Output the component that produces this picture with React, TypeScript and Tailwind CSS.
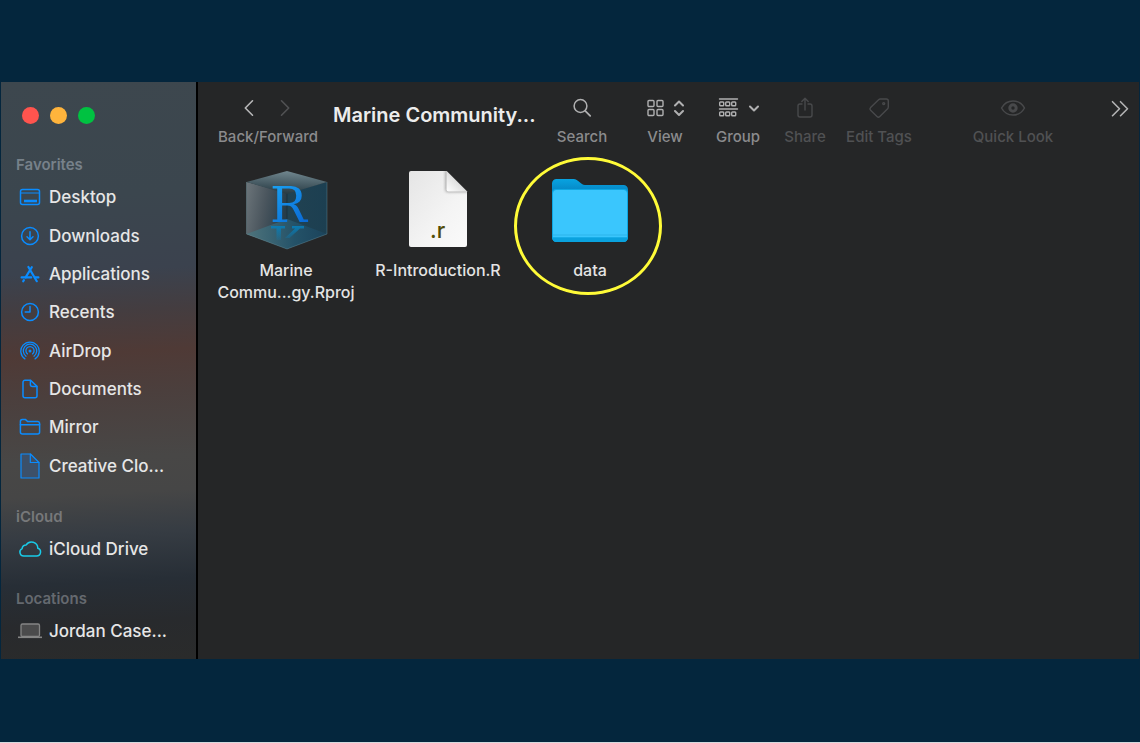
import type { ReactNode } from 'react';

function Glyph({ w, h, children, sw = 1.5 }: { w: number; h: number; children: ReactNode; sw?: number }) {
  return (
    <svg
      width={w}
      height={h}
      viewBox={`0 0 ${w} ${h}`}
      fill="none"
      stroke="currentColor"
      strokeWidth={sw}
      strokeLinecap="round"
      strokeLinejoin="round"
      aria-hidden="true"
      className="shrink-0"
    >
      {children}
    </svg>
  );
}

const desktopIcon = (
  <Glyph w={22} h={18}>
    <rect x="1.5" y="1.5" width="19" height="15" rx="2" />
    <path d="M1.5 5h19" strokeWidth="1.2" />
    <path d="M5 13h13" strokeWidth="2.6" strokeLinecap="butt" />
  </Glyph>
);

const downloadsIcon = (
  <Glyph w={20} h={20}>
    <circle cx="10" cy="10" r="8.4" />
    <path d="M10 5.8v7.8M7 10.8l3 3 3-3" />
  </Glyph>
);

const applicationsIcon = (
  <Glyph w={20} h={20} sw={2.2}>
    <path d="M11.8 3.2 5.6 13.4M3.9 16.1l-.7 1.2M8.4 3l8.4 14.2" />
    <path d="M1.6 13.4h9.6M15 13.4h3.4" />
  </Glyph>
);

const recentsIcon = (
  <Glyph w={20} h={20}>
    <circle cx="10" cy="10" r="8.4" />
    <path d="M10 4.6V10H5.2" />
  </Glyph>
);

const airdropIcon = (
  <Glyph w={20} h={20} sw={1.3}>
    <path d="M4.9 17.9a9.2 9.2 0 1 1 10.2 0" />
    <path d="M6 15.2a6.7 6.7 0 1 1 8 0" />
    <path d="M7.5 12.9a4.1 4.1 0 1 1 5 0" />
    <circle cx="10" cy="10" r="1.5" fill="currentColor" stroke="none" />
  </Glyph>
);

const documentsIcon = (
  <Glyph w={16} h={20}>
    <path d="M3 1.2h5.600L15 7.400v9.400a2 2 0 0 1-2 2H3a2 2 0 0 1-2-2V3.200a2 2 0 0 1 2-2Z" />
    <path d="M8.400 1.400v4.200a2 2 0 0 0 2 2h4.400" />
  </Glyph>
);

const folderIcon = (
  <Glyph w={22} h={18}>
    <path d="M1.400 14V3.400a1.800 1.800 0 0 1 1.800-1.800h3.400l2 1.900h10a2 2 0 0 1 2 2V14a2 2 0 0 1-2 2H3.400a2 2 0 0 1-2-2Z" />
    <path d="M1.400 6.800h19.200" />
  </Glyph>
);

const creativeIcon = (
  <Glyph w={20} h={26} sw={1.2}>
    <path d="M1 1h9.500L19 9.500V25H1Z" fill="#3d5068" />
    <path d="M10.300 1v8.500H19" />
  </Glyph>
);

const cloudIcon = (
  <Glyph w={24} h={18}>
    <path d="M6 16h12.500a4 4 0 0 0 1.300-7.800A6.300 6.300 0 0 0 8.200 4.900 3.900 3.900 0 0 0 4.100 8.600 3.900 3.900 0 0 0 6 16Z" />
  </Glyph>
);

const laptopIcon = (
  <Glyph w={26} h={18} sw={1.3}>
    <rect x="4" y="2" width="18.500" height="12.500" rx="1.500" fill="#4b4b4c" />
    <path d="M1 15.300h24" strokeWidth="1.600" strokeLinecap="butt" />
  </Glyph>
);

const favorites = [
  { label: 'Desktop', icon: desktopIcon },
  { label: 'Downloads', icon: downloadsIcon },
  { label: 'Applications', icon: applicationsIcon },
  { label: 'Recents', icon: recentsIcon },
  { label: 'AirDrop', icon: airdropIcon },
  { label: 'Documents', icon: documentsIcon },
  { label: 'Mirror', icon: folderIcon },
  { label: 'Creative Clo...', icon: creativeIcon },
];

function SidebarLink({ label, icon, tone = 'text-[#0a8cff]' }: { label: string; icon: ReactNode; tone?: string }) {
  return (
    <a href="#" className="flex h-full items-center gap-[5px] text-[17px] leading-6 font-medium text-[#e6e6e6]">
      <span className={`flex w-7 justify-center ${tone}`}>{icon}</span>
      <span className="whitespace-nowrap">{label}</span>
    </a>
  );
}

function SidebarHeading({ children }: { children: ReactNode }) {
  return <h2 className="text-[15px] leading-5 font-semibold">{children}</h2>;
}

function Sidebar() {
  return (
    <nav
      aria-label="Sidebar"
      className="w-[197px] shrink-0 border-r-2 border-black bg-[linear-gradient(177deg,#3d474e_0%,#3b464e_20%,#3b424e_33%,#443d40_40%,#4f3a36_47%,#4b3f3d_54%,#484746_65%,#464646_71%,#363c43_78%,#272e36_86%,#282a2d_93%,#2a2b2b_100%)] pl-[15px]"
    >
      <div className="flex gap-[11px] pt-[25px] pl-[6px]">
        <button aria-label="Close" className="size-[17px] rounded-full bg-[#ff544e]" />
        <button aria-label="Minimize" className="size-[17px] rounded-full bg-[#ffb43c]" />
        <button aria-label="Zoom" className="size-[17px] rounded-full bg-[#00c241]" />
      </div>
      <div className="mt-[31px] text-[#77818a]">
        <SidebarHeading>Favorites</SidebarHeading>
      </div>
      <ul className="mt-[3px] flex h-[307px] flex-col">
        {favorites.map((item) => (
          <li key={item.label} className="flex-1">
            <SidebarLink {...item} />
          </li>
        ))}
      </ul>
      <div className="mt-[22px] text-[#77787a]">
        <SidebarHeading>iCloud</SidebarHeading>
      </div>
      <div className="mt-[3px] h-[38px]">
        <SidebarLink label="iCloud Drive" icon={cloudIcon} tone="text-[#19cbe8]" />
      </div>
      <div className="mt-[21px] text-[#65696f]">
        <SidebarHeading>Locations</SidebarHeading>
      </div>
      <div className="mt-[3px] h-[38px]">
        <SidebarLink label="Jordan Case..." icon={laptopIcon} tone="text-[#858585]" />
      </div>
    </nav>
  );
}

function Tool({ label, width, dim, children }: { label: string; width: string; dim?: boolean; children: ReactNode }) {
  return (
    <button
      disabled={dim}
      className={`flex shrink-0 flex-col items-center gap-[5px] text-[15px] leading-5 font-medium ${width} ${dim ? 'text-[#505153]' : 'text-[#8b8b8d]'}`}
    >
      <span className={`flex h-7 items-center gap-2 ${dim ? 'text-[#48494b]' : 'text-[#b0b0b1]'}`}>{children}</span>
      <span className="whitespace-nowrap">{label}</span>
    </button>
  );
}

function Toolbar() {
  const cells = [1, 7, 13];
  return (
    <header className="flex h-[74px] items-start pt-3 pr-2 pl-5">
      <div className="flex w-[100px] shrink-0 flex-col items-center gap-[5px]">
        <div className="flex h-7 items-center gap-4">
          <button aria-label="Back" className="text-[#b8b8b9]">
            <Glyph w={20} h={20} sw={1.600}>
              <path d="M12.500 2.800 5.300 10l7.200 7.200" />
            </Glyph>
          </button>
          <button aria-label="Forward" className="text-[#515254]">
            <Glyph w={20} h={20} sw={1.600}>
              <path d="M5.500 2.800 12.700 10l-7.200 7.200" />
            </Glyph>
          </button>
        </div>
        <span className="text-[15px] leading-5 font-medium text-[#8b8b8d]">Back/Forward</span>
      </div>
      <h1 className="ml-[15px] w-[209px] shrink-0 pt-[7px] text-[20px] leading-7 font-semibold whitespace-nowrap text-[#ececec]">
        Marine Community...
      </h1>
      <Tool label="Search" width="w-20">
        <Glyph w={20} h={20}>
          <circle cx="8.500" cy="8" r="6.400" />
          <path d="m13.200 12.800 5 5" strokeWidth="1.800" />
        </Glyph>
      </Tool>
      <Tool label="View" width="w-[86px]">
        <Glyph w={18} h={18} sw={1.400}>
          <rect x="2" y="1.500" width="6" height="6" rx="1" />
          <rect x="11" y="1.500" width="6" height="6" rx="1" />
          <rect x="2" y="10.500" width="6" height="6" rx="1" />
          <rect x="11" y="10.500" width="6" height="6" rx="1" />
        </Glyph>
        <Glyph w={12} h={18} sw={2}>
          <path d="m3 6.500 4-4 4 4M3 12l4 4 4-4" />
        </Glyph>
      </Tool>
      <Tool label="Group" width="w-[60px]">
        <Glyph w={22} h={20} sw={1.400}>
          <path d="M2.500 1h18M2.500 11h18" />
          {cells.map((x) => (
            <g key={x}>
              <rect x={x + 1.700} y="4" width="4" height="3.800" rx="0.800" />
              <rect x={x + 1.700} y="14" width="4" height="3.800" rx="0.800" />
            </g>
          ))}
        </Glyph>
        <Glyph w={12} h={12} sw={2}>
          <path d="m3 4.500 4 4 4-4" />
        </Glyph>
      </Tool>
      <Tool label="Share" width="w-[74px]" dim>
        <Glyph w={18} h={22} sw={1.400}>
          <path d="M6 7H4a2 2 0 0 0-2 2v9a2 2 0 0 0 2 2h10a2 2 0 0 0 2-2V9a2 2 0 0 0-2-2h-2" />
          <path d="M9 13V1.500M5.800 4.500 9 1.300l3.200 3.200" />
        </Glyph>
      </Tool>
      <Tool label="Edit Tags" width="w-[74px]" dim>
        <Glyph w={22} h={22} sw={1.400}>
          <path d="M12.300 2h6a2 2 0 0 1 2 2v6a2.500 2.500 0 0 1-.7 1.700l-7.800 7.800a2 2 0 0 1-2.800 0l-6.400-6.300a2 2 0 0 1 0-2.800l8-7.700a2.500 2.500 0 0 1 1.700-.7Z" />
          <circle cx="15.700" cy="6.600" r="1" />
        </Glyph>
      </Tool>
      <div className="ml-[50px]">
        <Tool label="Quick Look" width="w-[94px]" dim>
          <Glyph w={26} h={18}>
            <path d="M1.500 9C4 4.500 8 2 13 2s9 2.500 11.500 7C22 13.500 18 16 13 16S4 13.500 1.500 9Z" />
            <circle cx="13" cy="9" r="3.200" strokeWidth="3" />
          </Glyph>
        </Tool>
      </div>
      <button aria-label="More toolbar items" className="ml-auto flex h-7 items-center text-[#b4b4b5]">
        <Glyph w={22} h={20} sw={1.600}>
          <path d="m3.500 3.700 7 7-7 7M11.500 3.700l7 7-7 7" />
        </Glyph>
      </button>
    </header>
  );
}

function ProjectCube() {
  return (
    <svg width="84" height="80" viewBox="-1 0 84 80" aria-hidden="true">
      <defs>
        <linearGradient id="left" x1="0" y1="0" x2="1" y2="0.300">
          <stop offset="0" stopColor="#6c757a" />
          <stop offset="0.500" stopColor="#4b565e" />
          <stop offset="1" stopColor="#263c49" />
        </linearGradient>
        <linearGradient id="right" x1="0" y1="0" x2="1" y2="0">
          <stop offset="0" stopColor="#214252" />
          <stop offset="1" stopColor="#1c3f51" />
        </linearGradient>
        <linearGradient id="top" x1="0.600" y1="0" x2="0.450" y2="1">
          <stop offset="0" stopColor="#728890" />
          <stop offset="1" stopColor="#263942" />
        </linearGradient>
        <linearGradient id="floor" x1="0" y1="0" x2="1" y2="0">
          <stop offset="0" stopColor="#4f747c" />
          <stop offset="0.600" stopColor="#245268" />
          <stop offset="1" stopColor="#1b435b" />
        </linearGradient>
        <linearGradient id="letter" x1="0" y1="0" x2="0.600" y2="1">
          <stop offset="0" stopColor="#1cabf8" />
          <stop offset="1" stopColor="#0a68d4" />
        </linearGradient>
        <linearGradient id="fade" gradientUnits="userSpaceOnUse" x1="0" y1="56" x2="0" y2="70">
          <stop offset="0" stopColor="#087fba" stopOpacity="0.900" />
          <stop offset="1" stopColor="#087fba" stopOpacity="0.150" />
        </linearGradient>
      </defs>
      <path d="M1.500 12 42 23v56L1.500 64Z" fill="url(#left)" />
      <path d="M82 12 42 23v56l40-15Z" fill="url(#right)" />
      <path d="m42 1 40 11-40 12L1.500 12Z" fill="url(#top)" />
      <path d="m1.500 64 40.500-15L82 64 42 79Z" fill="url(#floor)" />
      <path d="M1.500 12v52L42 79l40-15V12" fill="none" stroke="#729aa5" strokeOpacity="0.350" />
      <path d="M42 24v25" stroke="#10262f" strokeOpacity="0.500" />
      <text x="25" y="52" fontSize="49" fontFamily="DejaVu Serif, serif" fill="url(#letter)">
        R
      </text>
      <path d="M26 56h14v2.500H26ZM47 56h12v2.500H47ZM31.500 58.500h4.500V70h-4.500ZM50 58.500h5L44.500 68H40Z" fill="url(#fade)" />
    </svg>
  );
}

function ScriptFile() {
  return (
    <svg width="60" height="80" viewBox="0 0 60 80" aria-hidden="true">
      <defs>
        <linearGradient id="paper" x1="0" y1="0" x2="1" y2="1">
          <stop offset="0" stopColor="#e5e5e5" />
          <stop offset="0.600" stopColor="#f4f4f4" />
          <stop offset="1" stopColor="#fafafa" />
        </linearGradient>
        <linearGradient id="fold" x1="0" y1="1" x2="0.600" y2="0.400">
          <stop offset="0" stopColor="#ffffff" />
          <stop offset="1" stopColor="#d9d9d9" />
        </linearGradient>
        <filter id="soft">
          <feGaussianBlur stdDeviation="1.500" />
        </filter>
        <clipPath id="sheet">
          <path d="M3 1h35.500L59 21.500V75a2 2 0 0 1-2 2H3a2 2 0 0 1-2-2V3a2 2 0 0 1 2-2Z" />
        </clipPath>
      </defs>
      <path d="M3 1h35.500L59 21.500V75a2 2 0 0 1-2 2H3a2 2 0 0 1-2-2V3a2 2 0 0 1 2-2Z" fill="url(#paper)" />
      <g clipPath="url(#sheet)">
        <path d="M37.500 0v20a2 2 0 0 0 2 2H60V0Z" fill="#777" opacity="0.700" filter="url(#soft)" />
      </g>
      <path d="M38.500 1v18.500a2 2 0 0 0 2 2H59Z" fill="url(#fold)" />
      <text x="22" y="68" fontSize="22" fontWeight="500" fontFamily="Inter, sans-serif" fill="#504c08">
        .r
      </text>
    </svg>
  );
}

function DataFolder() {
  return (
    <svg width="78" height="80" viewBox="0 0 78 80" aria-hidden="true">
      <defs>
        <linearGradient id="back" x1="0" y1="0" x2="0" y2="1">
          <stop offset="0" stopColor="#08a3e1" />
          <stop offset="0.250" stopColor="#057fbd" />
        </linearGradient>
      </defs>
      <path d="M1 13.500A4.500 4.500 0 0 1 5.500 9h17c5 0 7 6 11.500 6h38.500a4.500 4.500 0 0 1 4.500 4.500V67a4.500 4.500 0 0 1-4.500 4.500h-67A4.500 4.500 0 0 1 1 67Z" fill="url(#back)" />
      <path d="M1 23a4 4 0 0 1 4-4h68a4 4 0 0 1 4 4v44.500a4.500 4.500 0 0 1-4.500 4.500h-67A4.500 4.500 0 0 1 1 67.500Z" fill="#0da7e3" />
      <path d="M2 23.500A3.500 3.500 0 0 1 5.500 20h67a3.500 3.500 0 0 1 3.500 3.500V67H2Z" fill="#3ac6fd" />
      <path d="M1.500 67h75v1a4 4 0 0 1-4 4h-67a4 4 0 0 1-4-4Z" fill="#0aa2de" />
      <path d="M2 65h74" stroke="#2db4ea" />
      <path d="M2 67.500h74" stroke="#1cb0eb" strokeWidth="0.800" />
    </svg>
  );
}

function FileItem({ name, children }: { name: ReactNode; children: ReactNode }) {
  return (
    <button className="relative flex w-[152px] flex-col items-center text-[16px] leading-[22px] font-medium text-[#e4e4e4]">
      {children}
      <span className="mt-[9px]">{name}</span>
    </button>
  );
}

export default function App() {
  return (
    <div className="flex min-h-screen flex-col justify-center border-b border-[#d5dade] bg-[#04263d] px-px pb-px font-['Inter',sans-serif]">
      <div className="flex min-h-[577px] bg-[#252627]">
        <Sidebar />
        <main className="min-w-0 flex-1">
          <Toolbar />
          <div className="flex items-start pt-[14px] pl-[12px]">
            <FileItem
              name={
                <>
                  Marine
                  <br />
                  Commu...gy.Rproj
                </>
              }
            >
              <ProjectCube />
            </FileItem>
            <FileItem name="R-Introduction.R">
              <ScriptFile />
            </FileItem>
            <FileItem name="data">
              <DataFolder />
              <span className="pointer-events-none absolute -top-[13px] left-0 h-[138px] w-[148px] rounded-[50%] border-3 border-[#fffb38]" />
            </FileItem>
          </div>
        </main>
      </div>
    </div>
  );
}
